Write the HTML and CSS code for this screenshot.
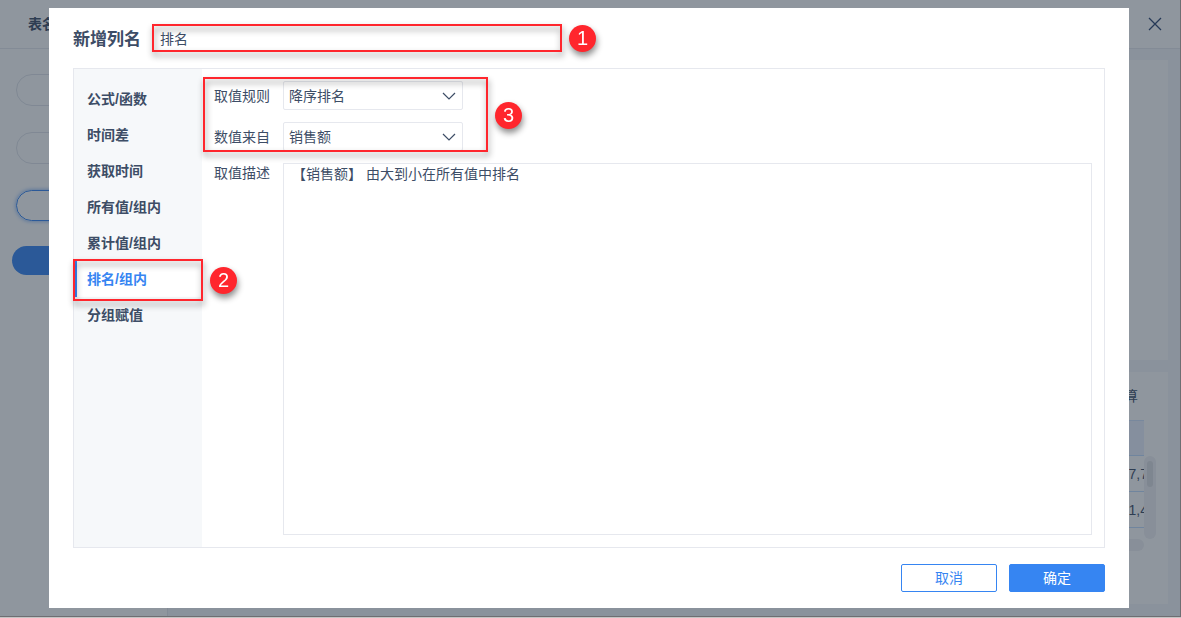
FILE: index.html
```html
<!DOCTYPE html>
<html lang="zh-CN">
<head>
  <meta charset="UTF-8">
  <meta name="viewport" content="width=device-width, initial-scale=1.0">
  <title>新增列名</title>
  <link rel="stylesheet" href="styles.css">
</head>
<body>
  <div class="window">
    <div class="page">
      <header class="page-header">
        <span class="page-title">表名</span>
        <button class="close-btn" type="button" aria-label="关闭">
          <svg width="14" height="14" viewBox="0 0 14 14"><path d="M1 1L13 13M13 1L1 13" fill="none" stroke="currentColor" stroke-width="1.3"/></svg>
        </button>
      </header>
      <div class="page-body">
        <aside class="steps">
          <div class="step"></div>
          <div class="step"></div>
          <div class="step focus"></div>
          <div class="step-add"></div>
        </aside>
        <main class="content">
          <section class="card card-flow"></section>
          <section class="card card-data">
            <h2 class="card-title">算</h2>
            <div class="data-view">
              <div class="data-rows">
                <div class="data-row head"></div>
                <div class="data-row"><span>7,7</span></div>
                <div class="data-row"><span>1,4</span></div>
                <div class="track-x"></div>
              </div>
              <div class="track-y"><div class="thumb"></div></div>
            </div>
          </section>
        </main>
      </div>
    </div>

    <div class="overlay">
      <form class="modal">
        <div class="modal-header">
          <label class="modal-title" for="col-name">新增列名</label>
          <div class="name-field">
            <input type="text" id="col-name" value="排名">
            <div class="mark-box"><span class="mark-num">1</span></div>
          </div>
        </div>

        <div class="panel">
          <nav class="tabs">
            <button type="button" class="tab">公式/函数</button>
            <button type="button" class="tab">时间差</button>
            <button type="button" class="tab">获取时间</button>
            <button type="button" class="tab">所有值/组内</button>
            <button type="button" class="tab">累计值/组内</button>
            <div class="tab-wrap">
              <button type="button" class="tab active">排名/组内</button>
              <div class="mark-box mark-tab"><span class="mark-num">2</span></div>
            </div>
            <button type="button" class="tab">分组赋值</button>
          </nav>

          <div class="fields">
            <div class="rules">
              <div class="field">
                <label for="rule">取值规则</label>
                <div class="select">
                  <select id="rule"><option>降序排名</option></select>
                  <svg width="14" height="8" viewBox="0 0 14 8"><path d="M1 1L7 7L13 1" fill="none" stroke="currentColor" stroke-width="1.2"/></svg>
                </div>
              </div>
              <div class="field">
                <label for="source">数值来自</label>
                <div class="select">
                  <select id="source"><option>销售额</option></select>
                  <svg width="14" height="8" viewBox="0 0 14 8"><path d="M1 1L7 7L13 1" fill="none" stroke="currentColor" stroke-width="1.2"/></svg>
                </div>
              </div>
              <div class="mark-box mark-rules"><span class="mark-num">3</span></div>
            </div>
            <div class="field field-desc">
              <label for="desc">取值描述</label>
              <textarea id="desc">【销售额】 由大到小在所有值中排名</textarea>
            </div>
          </div>
        </div>

        <div class="modal-footer">
          <button type="button" class="btn">取消</button>
          <button type="button" class="btn primary">确定</button>
        </div>
      </form>
    </div>
  </div>
</body>
</html>
```

FILE: styles.css
```css
* {
  box-sizing: border-box;
}

body {
  margin: 0;
  font-family: "Liberation Sans", "Noto Sans CJK SC", sans-serif;
  font-size: 14px;
  line-height: 20px;
  color: #3d4d66;
  background: #c4c4c4;
}

button, input, select, textarea {
  margin: 0;
  font: inherit;
  color: inherit;
}

.window {
  position: relative;
  height: calc(100vh - 1px);
  min-height: 420px;
  border-right: 1px solid #6e6e72;
  border-bottom: 1px solid #6e6e72;
  overflow: hidden;
}

/* page behind the dialog */
.page {
  display: flex;
  flex-direction: column;
  height: 100%;
  background: #fff;
}

.page-header {
  display: flex;
  align-items: center;
  justify-content: space-between;
  height: 49px;
  padding: 0 17px 0 28px;
  border-bottom: 1px solid #e6e8ee;
}

.page-title {
  font-weight: bold;
}

.close-btn {
  display: flex;
  padding: 1px;
  border: none;
  background: none;
  color: #2b4470;
}

.page-body {
  display: flex;
  flex: 1;
  min-height: 0;
}

.steps {
  display: flex;
  flex-direction: column;
  width: 168px;
  padding: 25px 12px;
  border-right: 1px solid #e6e8ee;
}

.step {
  height: 32px;
  margin: 0 4px 26px;
  border: 1px solid #e0e3ea;
  border-radius: 16px;
}

.step.focus {
  height: 31px;
  margin-bottom: 25px;
  border-color: #3685f2;
  box-shadow: 0 0 4px rgba(54, 133, 242, 0.7);
}

.step-add {
  height: 29px;
  border-radius: 15px;
  background: #3685f2;
}

.content {
  display: flex;
  flex: 1;
  flex-direction: column;
  gap: 12px;
  padding: 11px 12px 12px;
  background: #f5f7fa;
}

.card {
  background: #fff;
}

.card-flow {
  flex: 1;
}

.card-data {
  height: 232px;
  padding: 14px 12px 0;
}

.card-title {
  margin: 0 18px 14px;
  font-size: 14px;
  font-weight: 400;
  line-height: 20px;
  text-align: right;
}

.data-view {
  display: flex;
}

.data-rows {
  flex: 1;
}

.data-row {
  height: 36px;
  display: flex;
  align-items: center;
  justify-content: flex-end;
  border-bottom: 1px solid #c0dcff;
  overflow: hidden;
}

.data-row span {
  margin-right: -4px;
}

.data-row.head {
  background: #eaf0ff;
  border-top: 1px solid #d0e2fc;
}

.track-x {
  height: 12px;
  margin-top: 11px;
  border-radius: 6px;
  background: #f0f1f4;
}

.track-y {
  width: 12px;
  height: 83px;
  margin-top: 36px;
  padding: 5px 3px;
  border-radius: 6px;
  background: #f0f1f4;
}

.thumb {
  height: 26px;
  border-radius: 4px;
  background: #dddee2;
}

/* dialog */
.overlay {
  position: absolute;
  inset: 0;
  display: flex;
  padding: 8px 51px 8px 49px;
  background: rgba(31, 45, 61, 0.5);
}

.modal {
  display: flex;
  flex: 1;
  flex-direction: column;
  gap: 16px;
  min-width: 0;
  padding: 16px 24px;
  background: #fff;
}

.modal-header {
  display: flex;
  gap: 11px;
}

.modal-title {
  padding-top: 4px;
  font-size: 17px;
  font-weight: bold;
  line-height: 24px;
}

.name-field {
  position: relative;
  width: 410px;
}

.name-field input {
  display: block;
  width: 100%;
  height: 28px;
  padding: 0 8px;
  border: none;
  outline: none;
}

.panel {
  display: flex;
  flex: 1;
  border: 1px solid #e6e8ee;
}

.tabs {
  width: 128px;
  padding-top: 12px;
  background: #f6f8fa;
}

.tab-wrap {
  position: relative;
}

.tab {
  display: block;
  width: 100%;
  height: 36px;
  padding: 0 10px;
  border: none;
  border-left: 3px solid transparent;
  background: none;
  font-weight: bold;
  text-align: left;
}

.tab.active {
  border-left-color: #3685f2;
  background: #fff;
  color: #3685f2;
}

.fields {
  display: flex;
  flex: 1;
  flex-direction: column;
  gap: 12px;
  min-width: 0;
  padding: 12px;
}

.rules {
  position: relative;
  display: flex;
  flex-direction: column;
  gap: 12px;
  width: 249px;
}

.field {
  display: grid;
  grid-template-columns: 57px 1fr;
  column-gap: 12px;
  align-items: center;
}

.select {
  position: relative;
}

.select select {
  display: block;
  width: 100%;
  height: 29px;
  padding: 0 28px 0 5px;
  border: 1px solid #e6e8ee;
  border-radius: 2px;
  background: #fff;
  appearance: none;
}

.select svg {
  position: absolute;
  top: 11px;
  right: 7px;
  pointer-events: none;
}

.field-desc {
  flex: 1;
  align-items: stretch;
}

.field-desc textarea {
  display: block;
  width: 100%;
  height: 100%;
  padding: 0 8px;
  border: 1px solid #e6e8ee;
  outline: none;
  resize: none;
}

.modal-footer {
  display: flex;
  justify-content: flex-end;
  gap: 12px;
}

.btn {
  width: 96px;
  height: 28px;
  padding: 0;
  border: 1px solid #3685f2;
  border-radius: 2px;
  background: #fff;
  color: #3685f2;
}

.btn.primary {
  background: #3685f2;
  color: #fff;
}

/* red guide marks */
.mark-box {
  position: absolute;
  inset: 0;
  border: 2px solid #ff262d;
  filter: drop-shadow(1px 4px 3px rgba(0, 0, 0, 0.45));
  pointer-events: none;
}

.mark-tab {
  inset: -2px -1px -4px;
}

.mark-rules {
  inset: -4px -25px -1px -11px;
}

.mark-num {
  position: absolute;
  top: 50%;
  left: calc(100% + 9px);
  width: 27px;
  height: 27px;
  margin-top: -13px;
  border-radius: 50%;
  background: #ff262d;
  color: #fff;
  font-size: 20px;
  line-height: 27px;
  text-align: center;
}
```
